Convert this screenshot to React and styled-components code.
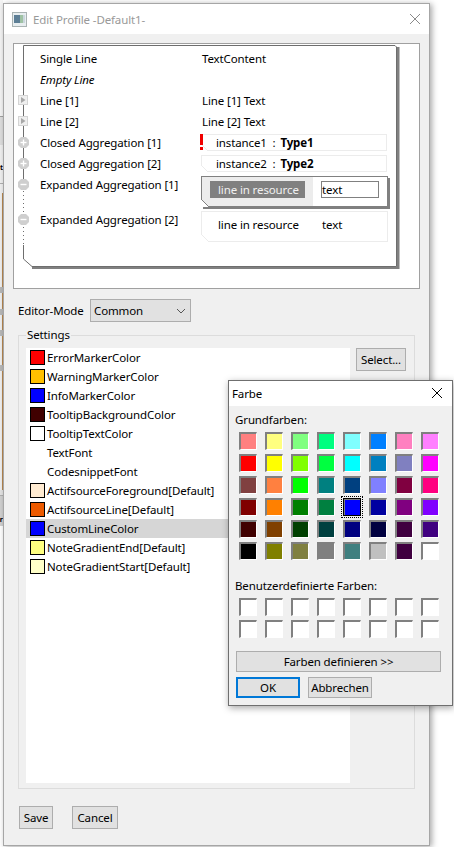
import React from 'react';
import styled, { createGlobalStyle } from 'styled-components';

const GlobalStyle = createGlobalStyle`
    html, body {
        margin: 0;
        padding: 0;
        background: #ffffff;
    }
    body {
        font-family: "Noto Sans", "Open Sans", sans-serif;
        font-size: 11.5px;
        letter-spacing: -0.12px;
        color: #000;
    }
`

const Page = styled.div`
    position: relative;
    width: 454px;
    height: 847px;
    overflow: hidden;
    display: flex;
`

const Backdrop = styled.div`
    width: 3px;
    flex: none;
    display: flex;
    flex-direction: column;
`

const BackdropPart = styled.div`
    height: ${props => props.h}px;
    flex: none;
    box-sizing: border-box;
    background: ${props => props.bg || '#f0f0f0'};
    border-right: ${props => props.line ? '1px solid #b98a52' : 'none'};
    display: flex;
    justify-content: flex-end;
    align-items: center;
    font-weight: 700;
    font-size: 7px;
    letter-spacing: 0;
`

const Window = styled.div`
    margin-top: 3px;
    width: 427px;
    height: 843px;
    flex: none;
    box-sizing: border-box;
    border: 1px solid #a6a6a6;
    background: #f0f0f0;
    box-shadow: 2px 1px 6px rgba(0, 0, 0, 0.35);
    display: flex;
    flex-direction: column;
`

const TitleBar = styled.div`
    height: 30px;
    flex: none;
    background: #fff;
    display: flex;
    align-items: center;
    padding: 0 9px 0 8px;
`

const TitleText = styled.div`
    margin-left: 6px;
    flex: 1;
    color: #999;
`

const Body = styled.div`
    flex: 1;
    display: flex;
    flex-direction: column;
    padding: 9px 9px 0 9px;
`

const PreviewPanel = styled.div`
    height: 246px;
    flex: none;
    box-sizing: border-box;
    border: 1px solid #a0a0a0;
    background: #fff;
    padding: 1px 0 0 9px;
`

const Note = styled.div`
    position: relative;
    width: 376px;
    height: 225px;
    padding-top: 3px;
    box-sizing: border-box;
`

const NoteOutline = styled.svg`
    position: absolute;
    left: 0;
    top: 0;
`

const Row = styled.div`
    position: relative;
    height: ${props => props.h || 21}px;
    display: grid;
    grid-template-columns: 177px 1fr;
    align-items: ${props => props.top ? 'start' : 'center'};
`

const RowLabel = styled.div`
    padding-left: 17px;
    font-style: ${props => props.italic ? 'italic' : 'normal'};
    line-height: 21px;
    white-space: nowrap;
`

const RowValue = styled.div`
    position: relative;
    padding-left: 2px;
    padding-top: ${props => props.top || 0}px;
    white-space: nowrap;
`

const Marker = styled.svg`
    position: absolute;
    left: -5px;
    top: ${props => props.top || 5}px;
`

const ErrorMark = styled.svg`
    position: absolute;
    left: 0;
    top: 0;
    z-index: 1;
`

const InstanceBox = styled.div`
    position: relative;
    width: 186px;
    height: 17px;
    margin-left: -1px;
    box-sizing: border-box;
    border: 1px solid #ececec;
    padding-left: 14px;
    display: flex;
    align-items: center;
    white-space: pre;
    &::after {
        content: "";
        position: absolute;
        left: -1px;
        bottom: -1px;
        width: 7px;
        height: 7px;
        background: linear-gradient(to top right, #fff 45%, #ececec 45%, #ececec 55%, transparent 55%);
    }
`

const TypeName = styled.b`
    margin-left: 2px;
    font-weight: 700;
`

const ExpandedBox = styled.div`
    position: relative;
    width: 187px;
    height: 31px;
    margin-left: -1px;
    box-sizing: border-box;
    display: grid;
    grid-template-columns: 111px 1fr;
    border: 1px solid ${props => props.active ? '#808080' : '#ececec'};
    box-shadow: ${props => props.active ? '2px 2px 0 #808080' : 'none'};
    &::after {
        content: "";
        position: absolute;
        left: -1px;
        bottom: -1px;
        width: 8px;
        height: 8px;
        background: linear-gradient(to top right, #fff 45%, ${props => props.active ? '#808080' : '#ececec'} 45%, ${props => props.active ? '#808080' : '#ececec'} 55%, transparent 55%);
    }
`

const ExpandedLeft = styled.div`
    background: ${props => props.active ? '#ececec' : '#fff'};
    padding: 4px 0 0 8px;
`

const ExpandedRight = styled.div`
    padding: 4px 0 0 8px;
`

const ResourceLabel = styled.div`
    width: 95px;
    height: 17px;
    box-sizing: border-box;
    padding-left: 8px;
    line-height: 17px;
    white-space: nowrap;
    background: ${props => props.active ? '#808080' : 'transparent'};
    color: ${props => props.active ? '#f0f0f0' : '#000'};
`

const TextField = styled.div`
    width: 58px;
    height: 17px;
    box-sizing: border-box;
    border: ${props => props.active ? '1px solid #808080' : '1px solid transparent'};
    padding-left: 0;
    line-height: 15px;
`

const ModeRow = styled.div`
    margin-top: 10px;
    margin-left: 5px;
    height: 23px;
    display: grid;
    grid-template-columns: 72px 101px;
    align-items: center;
    flex: none;
`

const ModeSelect = styled.div`
    height: 23px;
    box-sizing: border-box;
    border: 1px solid #adadad;
    background: #e1e1e1;
    display: flex;
    align-items: center;
    justify-content: space-between;
    padding: 0 4px 0 3px;
`

const Fieldset = styled.div`
    position: relative;
    margin: 13px 5px 0 5px;
    width: 397px;
    height: 454px;
    flex: none;
    box-sizing: border-box;
    border: 1px solid #dcdcdc;
    padding: 12px 0 0 7px;
    display: flex;
    gap: 6px;
    align-items: flex-start;
`

const Legend = styled.div`
    position: absolute;
    left: 7px;
    top: -9px;
    padding: 0 1px;
    background: #f0f0f0;
`

const List = styled.div`
    width: 324px;
    height: 435px;
    background: #fff;
    box-sizing: border-box;
`

const ListRow = styled.div`
    height: 19px;
    display: flex;
    align-items: center;
    padding-left: 4px;
    background: ${props => props.selected ? '#d6d6d6' : 'transparent'};
    white-space: nowrap;
`

const Swatch = styled.div`
    width: 15px;
    height: 15px;
    flex: none;
    box-sizing: border-box;
    border: 1px solid #000;
    background: ${props => props.color || 'transparent'};
    visibility: ${props => props.color ? 'visible' : 'hidden'};
    margin-right: 2px;
`

const Button = styled.div`
    box-sizing: border-box;
    width: ${props => props.w}px;
    height: ${props => props.h || 23}px;
    border: ${props => props.primary ? '2px solid #0078d7' : '1px solid #adadad'};
    background: #e1e1e1;
    display: flex;
    align-items: center;
    justify-content: center;
    flex: none;
    white-space: nowrap;
`

const Footer = styled.div`
    display: flex;
    gap: 19px;
    margin: 17px 0 0 6px;
`

const ColorDialog = styled.div`
    position: absolute;
    left: 228px;
    top: 380px;
    width: 225px;
    height: 326px;
    box-sizing: border-box;
    border: 1px solid #6f6f6f;
    background: #f0f0f0;
    box-shadow: 1px 2px 7px rgba(0, 0, 0, 0.35);
    display: flex;
    flex-direction: column;
`

const DialogTitle = styled.div`
    height: 25px;
    flex: none;
    background: #fff;
    display: flex;
    align-items: center;
    justify-content: space-between;
    padding: 0 10px 1px 3px;
    box-sizing: border-box;
`

const DialogBody = styled.div`
    padding: 5px 0 0 7px;
    display: flex;
    flex-direction: column;
`

const DialogLabel = styled.div`
    height: ${props => props.h || 18}px;
    line-height: 18px;
    margin-left: -1px;
    margin-bottom: ${props => props.gap || 0}px;
    white-space: nowrap;
`

const ColorGrid = styled.div`
    margin-left: 3px;
    display: grid;
    grid-template-columns: repeat(8, 18px);
    grid-auto-rows: 18px;
    column-gap: 8px;
    row-gap: 4px;
`

const Cell = styled.div`
    position: relative;
    box-sizing: border-box;
    width: 18px;
    height: 18px;
    border-style: solid;
    border-width: 2px 1px 1px 2px;
    border-color: #808080 #ffffff #ffffff #808080;
    background: ${props => props.color};
    ${props => props.selected ? `
    &::before {
        content: "";
        position: absolute;
        inset: -4px -3px -3px -4px;
        border: 1px dotted #000;
    }
    &::after {
        content: "";
        position: absolute;
        inset: -2px -1px -1px -2px;
        border: 1px solid #000;
    }` : ''}
`

const DefineButton = styled(Button)`
    margin: 13px 0 0 0;
`

const DialogButtons = styled.div`
    display: flex;
    gap: 8px;
    margin-top: 5px;
`

const backdrop = [
    { h: 116, bg: '#f4f4f4' },
    { h: 1, bg: '#a0a0a0' },
    { h: 28, bg: '#dedede' },
    { h: 15 },
    { h: 14, text: 't' },
    { h: 9 },
    { h: 1, bg: '#b0b0b0' },
    { h: 9 },
    { h: 94, line: true },
    { h: 6, bg: '#b8b8b8' },
    { h: 16, line: true },
    { h: 6, bg: '#b8b8b8' },
    { h: 15, line: true },
    { h: 6, bg: '#b8b8b8' },
    { h: 29, line: true },
    { h: 6, bg: '#b8b8b8' },
    { h: 119, line: true },
    { h: 5, bg: '#e4e4e4' },
    { h: 1, bg: '#b0b0b0' },
    { h: 16, bg: '#d0d0d0' },
    { h: 14, bg: '#d0d0d0', text: 'r' },
    { h: 321, bg: '#ffffff' }
];

const settings = [
    { name: 'ErrorMarkerColor', color: '#ff0000' },
    { name: 'WarningMarkerColor', color: '#ffc000' },
    { name: 'InfoMarkerColor', color: '#0000ff' },
    { name: 'TooltipBackgroundColor', color: '#400000' },
    { name: 'TooltipTextColor', color: '#ffffff' },
    { name: 'TextFont' },
    { name: 'CodesnippetFont' },
    { name: 'ActifsourceForeground[Default]', color: '#ffebd2' },
    { name: 'ActifsourceLine[Default]', color: '#ec5a00' },
    { name: 'CustomLineColor', color: '#0000ff', selected: true },
    { name: 'NoteGradientEnd[Default]', color: '#ffff80' },
    { name: 'NoteGradientStart[Default]', color: '#ffffc8' }
];

const basicColors = [
    '#ff8080', '#ffff80', '#80ff80', '#00ff80', '#80ffff', '#0080ff', '#ff80c0', '#ff80ff',
    '#ff0000', '#ffff00', '#80ff00', '#00ff40', '#00ffff', '#0080c0', '#8080c0', '#ff00ff',
    '#804040', '#ff8040', '#00ff00', '#008080', '#004080', '#8080ff', '#800040', '#ff0080',
    '#800000', '#ff8000', '#008000', '#008040', '#0000ff', '#0000a0', '#800080', '#8000ff',
    '#400000', '#804000', '#004000', '#004040', '#000080', '#000040', '#400040', '#400080',
    '#000000', '#808000', '#808040', '#808080', '#408080', '#c0c0c0', '#400040', '#ffffff'
];

const customColors = Array(16).fill('#ffffff');

const AppIcon = () => (
    <svg width="15" height="15" viewBox="0 0 15 15">
        <rect x="0.5" y="0.5" width="14" height="14" fill="#e8eef0" stroke="#a9b3b3" />
        <rect x="2" y="3" width="6" height="8" fill="#5d7f96" />
        <rect x="8" y="3" width="3" height="8" fill="#9fc2a4" />
        <rect x="11" y="3" width="2" height="8" fill="#c9d6dc" />
    </svg>
);

const CloseIcon = ({ size, color }) => (
    <svg width={size} height={size} viewBox="0 0 10 10">
        <path d="M0 0L10 10M10 0L0 10" stroke={color} strokeWidth="1" fill="none" />
    </svg>
);

const TriangleMarker = ({ top }) => (
    <Marker top={top} width="10" height="10" viewBox="0 0 10 10">
        <rect x="0.5" y="0.5" width="9" height="9" fill="#efefef" stroke="#d4d4d4" />
        <path d="M3 2L7.5 5L3 8Z" fill="#a8a8a8" />
    </Marker>
);

const DiamondMarker = ({ top, plus }) => (
    <Marker top={top} width="11" height="11" viewBox="0 0 11 11">
        <path d="M3 0H8L11 3V8L8 11H3L0 8V3Z" fill="#cfcfcf" />
        <path d="M2.5 5.5H8.5" stroke="#fff" strokeWidth="1.4" />
        {plus ? <path d="M5.5 2.5V8.5" stroke="#fff" strokeWidth="1.4" /> : null}
    </Marker>
);

const NoteShape = () => (
    <NoteOutline width="377" height="226" viewBox="0 0 377 226">
        <path d="M9 222.5H375V2" fill="none" stroke="#808080" strokeWidth="3" />
        <path d="M0.5 142V0.5H372L373.5 2V221" fill="none" stroke="#6e6e6e" />
        <path d="M0.5 142V200" fill="none" stroke="#6e6e6e" strokeDasharray="1 3" />
        <path d="M0.5 200V214L9 221.5H373" fill="none" stroke="#6e6e6e" />
    </NoteOutline>
);

const ErrorIcon = () => (
    <ErrorMark width="3" height="17" viewBox="0 0 3 17">
        <rect x="0" y="0" width="3" height="11" fill="#f00000" />
        <rect x="0" y="13" width="3" height="3" fill="#f00000" />
    </ErrorMark>
);

const Chevron = () => (
    <svg width="10" height="6" viewBox="0 0 10 6">
        <path d="M1 1L5 5L9 1" fill="none" stroke="#555" strokeWidth="1" />
    </svg>
);

export default function App() {
    return (
        <Page>
            <GlobalStyle />
            <Backdrop>
                {backdrop.map((part, i) => (
                    <BackdropPart key={i} h={part.h} bg={part.bg} line={part.line}>{part.text}</BackdropPart>
                ))}
            </Backdrop>
            <Window>
                <TitleBar>
                    <AppIcon />
                    <TitleText>Edit Profile -Default1-</TitleText>
                    <CloseIcon size={10} color="#8a8a8a" />
                </TitleBar>
                <Body>
                    <PreviewPanel>
                        <Note>
                            <NoteShape />
                            <Row>
                                <RowLabel>Single Line</RowLabel>
                                <RowValue>TextContent</RowValue>
                            </Row>
                            <Row>
                                <RowLabel italic>Empty Line</RowLabel>
                            </Row>
                            <Row>
                                <TriangleMarker />
                                <RowLabel>Line [1]</RowLabel>
                                <RowValue>Line [1] Text</RowValue>
                            </Row>
                            <Row>
                                <TriangleMarker />
                                <RowLabel>Line [2]</RowLabel>
                                <RowValue>Line [2] Text</RowValue>
                            </Row>
                            <Row>
                                <DiamondMarker plus />
                                <RowLabel>Closed Aggregation [1]</RowLabel>
                                <RowValue>
                                    <ErrorIcon />
                                    <InstanceBox>instance1  : <TypeName>Type1</TypeName></InstanceBox>
                                </RowValue>
                            </Row>
                            <Row>
                                <DiamondMarker plus />
                                <RowLabel>Closed Aggregation [2]</RowLabel>
                                <RowValue>
                                    <InstanceBox>instance2  : <TypeName>Type2</TypeName></InstanceBox>
                                </RowValue>
                            </Row>
                            <Row h={35} top>
                                <DiamondMarker />
                                <RowLabel>Expanded Aggregation [1]</RowLabel>
                                <RowValue top={2}>
                                    <ExpandedBox active>
                                        <ExpandedLeft active>
                                            <ResourceLabel active>line in resource</ResourceLabel>
                                        </ExpandedLeft>
                                        <ExpandedRight>
                                            <TextField active>text</TextField>
                                        </ExpandedRight>
                                    </ExpandedBox>
                                </RowValue>
                            </Row>
                            <Row h={31} top>
                                <DiamondMarker />
                                <RowLabel>Expanded Aggregation [2]</RowLabel>
                                <RowValue top={2}>
                                    <ExpandedBox>
                                        <ExpandedLeft>
                                            <ResourceLabel>line in resource</ResourceLabel>
                                        </ExpandedLeft>
                                        <ExpandedRight>
                                            <TextField>text</TextField>
                                        </ExpandedRight>
                                    </ExpandedBox>
                                </RowValue>
                            </Row>
                        </Note>
                    </PreviewPanel>
                    <ModeRow>
                        Editor-Mode
                        <ModeSelect>
                            Common
                            <Chevron />
                        </ModeSelect>
                    </ModeRow>
                    <Fieldset>
                        <Legend>Settings</Legend>
                        <List>
                            {settings.map(item => (
                                <ListRow key={item.name} selected={item.selected}>
                                    <Swatch color={item.color} />
                                    {item.name}
                                </ListRow>
                            ))}
                        </List>
                        <Button w={50}>Select...</Button>
                    </Fieldset>
                    <Footer>
                        <Button w={34}>Save</Button>
                        <Button w={46}>Cancel</Button>
                    </Footer>
                </Body>
            </Window>
            <ColorDialog>
                <DialogTitle>
                    Farbe
                    <CloseIcon size={10} color="#000" />
                </DialogTitle>
                <DialogBody>
                    <DialogLabel gap={3}>Grundfarben:</DialogLabel>
                    <ColorGrid>
                        {basicColors.map((color, i) => (
                            <Cell key={i} color={color} selected={i === 28} />
                        ))}
                    </ColorGrid>
                    <DialogLabel h={17}>&nbsp;</DialogLabel>
                    <DialogLabel gap={3}>Benutzerdefinierte Farben:</DialogLabel>
                    <ColorGrid>
                        {customColors.map((color, i) => (
                            <Cell key={i} color={color} />
                        ))}
                    </ColorGrid>
                    <DefineButton w={205} h={21}>Farben definieren &gt;&gt;</DefineButton>
                    <DialogButtons>
                        <Button w={64} h={21} primary>OK</Button>
                        <Button w={64} h={21}>Abbrechen</Button>
                    </DialogButtons>
                </DialogBody>
            </ColorDialog>
        </Page>
    );
}
